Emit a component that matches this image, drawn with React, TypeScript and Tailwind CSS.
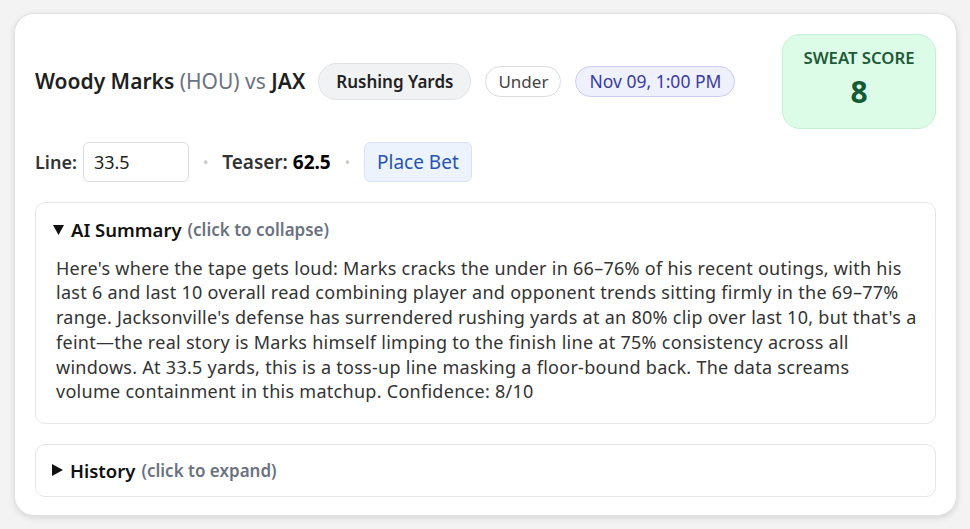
const SUMMARY =
  "Here's where the tape gets loud: Marks cracks the under in 66–76% of his recent outings, with his last 6 and last 10 overall read combining player and opponent trends sitting firmly in the 69–77% range. Jacksonville's defense has surrendered rushing yards at an 80% clip over last 10, but that's a feint—the real story is Marks himself limping to the finish line at 75% consistency across all windows. At 33.5 yards, this is a toss-up line masking a floor-bound back. The data screams volume containment in this matchup. Confidence: 8/10";

function Dot() {
  return <span className="text-[#c8c8c8] text-[14px] px-[14px]">•</span>;
}

function Caret({ open }: { open: boolean }) {
  return open ? (
    <svg width="11" height="10" viewBox="0 0 11 10" className="mr-[7px] shrink-0">
      <path d="M0 0 H11 L5.5 10 Z" fill="#111" />
    </svg>
  ) : (
    <svg width="11" height="12" viewBox="0 0 11 12" className="mr-[7px] shrink-0">
      <path d="M0 0 V12 L11 6 Z" fill="#111" />
    </svg>
  );
}

export default function App() {
  return (
    <div
      className="min-h-screen bg-[#f3f3f3] px-[14px] pt-[13px] text-[#222]"
      style={{ fontFamily: '"Noto Sans", "Open Sans", sans-serif' }}
    >
      <div className="w-[943px] h-[503px] bg-white border border-[#e2e2e2] rounded-[20px] shadow-[0_2px_6px_rgba(0,0,0,0.12)] px-[20px] pt-[20px]">
        {/* header */}
        <div className="flex items-center justify-between">
          <div className="flex items-center">
            <div className="text-[21px] font-semibold text-[#1f1f1f] mr-[13px]">
              Woody Marks <span className="font-normal text-[#6b7280]">(HOU)</span>{' '}
              <span className="font-normal text-[#6b7280]">vs</span> JAX
            </div>
            <span className="h-[37px] flex items-center px-[17px] rounded-full bg-[#f1f2f4] border border-[#e0e2e6] text-[17px] font-semibold text-[#222] mr-[14px]">
              Rushing Yards
            </span>
            <span className="h-[31px] flex items-center px-[12px] rounded-full bg-white border border-[#dcdcdc] text-[17px] text-[#444] mr-[14px]">
              Under
            </span>
            <span className="h-[31px] flex items-center px-[13px] rounded-full bg-[#eef0fc] border border-[#c9cdf2] text-[17.5px] text-[#3b3b9e]">
              Nov 09, 1:00 PM
            </span>
          </div>
          <div className="w-[154px] h-[95px] rounded-[18px] bg-[#dcfce7] border border-[#c6f0d4] flex flex-col items-center justify-center">
            <div className="text-[16.7px] font-semibold text-[#1e5a37] leading-tight -mt-[4px]">SWEAT SCORE</div>
            <div className="text-[30px] font-bold text-[#145a32] leading-tight mt-[4px]">8</div>
          </div>
        </div>

        {/* line row */}
        <div className="flex items-center mt-[13px] text-[18px]">
          <span className="font-semibold text-[#333] mr-[6px]">Line:</span>
          <input
            defaultValue="33.5"
            className="w-[106px] h-[40px] border border-[#dcdcdc] rounded-[6px] px-[10px] text-[18px] text-[#222] outline-none"
          />
          <Dot />
          <span className="font-semibold text-[#333] text-[19px]">
            Teaser: <span className="font-bold text-black">62.5</span>
          </span>
          <Dot />
          <button className="h-[40px] px-[12px] rounded-[6px] bg-[#edf3fd] border border-[#d8e4f6] text-[19px] text-[#2753b5]">
            Place Bet
          </button>
        </div>

        {/* AI summary */}
        <div className="mt-[20px] border border-[#e6e6e6] rounded-[10px] px-[20px] pt-[13px] pb-[19px]">
          <div className="flex items-center text-[18.5px] font-semibold text-[#111] -ml-[3px]">
            <Caret open />
            AI Summary
            <span className="ml-[6px] text-[17px] text-[#6b7280]">(click to collapse)</span>
          </div>
          <p className="mt-[12px] -mr-[2px] text-[18px] tracking-[0.28px] leading-[24.7px] text-[#333]">{SUMMARY}</p>
        </div>

        {/* history */}
        <div className="mt-[20px] border border-[#e6e6e6] rounded-[10px] pl-[16px] h-[53px] flex items-center text-[18.5px] font-semibold text-[#111]">
          <Caret open={false} />
          History
          <span className="ml-[6px] text-[17px] text-[#6b7280]">(click to expand)</span>
        </div>
      </div>
    </div>
  );
}
